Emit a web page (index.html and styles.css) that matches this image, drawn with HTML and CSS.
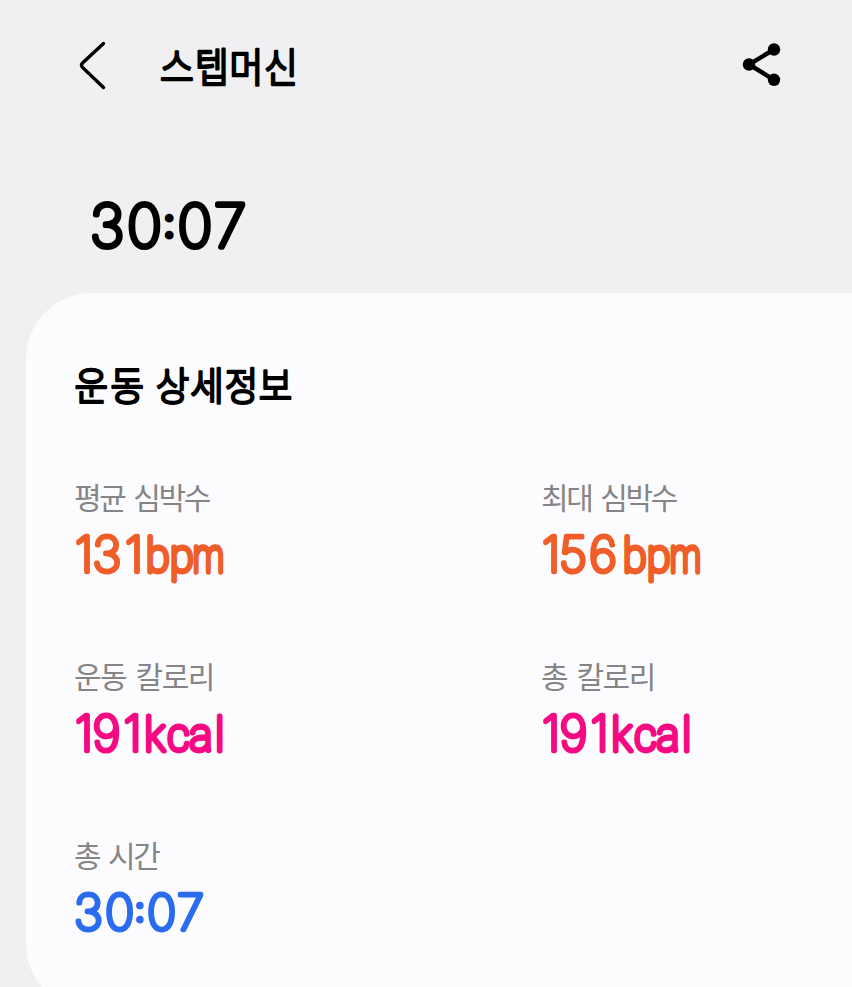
FILE: index.html
```html
<!DOCTYPE html>
<html lang="ko">
<head>
<meta charset="utf-8">
<title>스텝머신</title>
<link rel="stylesheet" href="styles.css">
</head>
<body>
<header class="bar">
  <svg class="back" viewBox="0 0 30 52" aria-hidden="true"><path d="M25.5 3.5 L4.5 23 Q2.5 25.2 4.5 27.4 L25.5 47.5"/></svg>
  <h1 class="title"><svg class="label-art" width="150" height="54"><text transform="translate(0 42) scale(.92 1)" x="0 38 75.5 113">스텝머신</text></svg></h1>
  <svg class="share" viewBox="0 0 40 46" aria-hidden="true"><path d="M32 7.5 L7 22.5 L32 37.8"/><circle cx="32" cy="7.5" r="6.2"/><circle cx="7" cy="22.5" r="6.2"/><circle cx="32" cy="37.8" r="6.2"/></svg>
</header>
<div class="duration"><svg class="value" width="180" height="60"><text class="digits large" x="1 38" y="50">30<tspan class="colon" x="74" y="40.5">:</tspan><tspan x="88.5 125" y="50">07</tspan></text></svg></div>
<main class="card">
  <h2 class="heading"><svg class="label-art small" width="230" height="58"><text transform="translate(0.5 43) scale(.945 1)" x="0 38 75 86 122.5 159 195">운동 상세정보</text></svg></h2>
  <dl class="stats">
    <div class="stat"><dt>평균 심박수</dt><dd><svg class="value orange" width="180" height="60"><text class="digits" x="1 18.5 51" y="49.5">131</text><text class="letters" transform="translate(72 49.5) scale(.92 1)" x="0 26">bp</text><text class="letters m" transform="translate(119 49.5) scale(.73 1)">m</text></svg></dd></div>
    <div class="stat"><dt>최대 심박수</dt><dd><svg class="value orange" width="180" height="60"><text class="digits" x="1 18 48" y="49.5">156</text><text class="letters" transform="translate(82 49.5) scale(.92 1)" x="0 26">bp</text><text class="letters m" transform="translate(129 49.5) scale(.73 1)">m</text></svg></dd></div>
    <div class="stat"><dt class="wide">운동 칼로리</dt><dd><svg class="value pink" width="180" height="60"><text class="digits" x="1 18.5 49.5" y="49.5">191</text><text class="letters" transform="translate(70.5 49.5) scale(.92 1)" x="0 25 49 77">kcal</text></svg></dd></div>
    <div class="stat"><dt class="wide">총 칼로리</dt><dd><svg class="value pink" width="180" height="60"><text class="digits" x="1 18.5 49.5" y="49.5">191</text><text class="letters" transform="translate(70.5 49.5) scale(.92 1)" x="0 25 49 77">kcal</text></svg></dd></div>
    <div class="stat"><dt>총 시간</dt><dd><svg class="value blue" width="180" height="60"><text class="digits" x="0 31" y="49.5">30<tspan class="colon" x="60.5" y="41.5">:</tspan><tspan x="73 103" y="49.5">07</tspan></text></svg></dd></div>
  </dl>
</main>
</body>
</html>
```

FILE: styles.css
```css
* { box-sizing: border-box; margin: 0; padding: 0; }
html { background: #f0f0f2; }
body { height: 987px; overflow: hidden; background: #f0f0f2; color: #000; font-family: Roboto, "Noto Sans CJK KR", sans-serif; white-space: nowrap; }
svg { display: block; overflow: visible; }
.bar { display: flex; align-items: flex-start; height: 197px; padding: 40px 70px 0 78px; }
.back { width: 30px; height: 52px; fill: none; stroke: #000; stroke-width: 3.4; stroke-linecap: round; }
.title { margin-left: 52px; }
.label-art { fill: #000; stroke: #000; stroke-width: 2.6; stroke-linejoin: round; font: 300 40px "Noto Sans CJK KR", sans-serif; }
.label-art.small { font-size: 38.5px; stroke-width: 2.5; }
.share { width: 40px; height: 46px; margin: 2px 0 0 auto; stroke: #000; stroke-width: 4.5; fill: none; }
.share circle { fill: #000; stroke: none; }
.duration { height: 96px; padding-left: 89px; }
.value { fill: currentColor; stroke: currentColor; stroke-linejoin: round; stroke-linecap: round; }
.digits { font: 100 49.5px Inter, sans-serif; stroke-width: 4.7px; }
.digits.large { font-size: 59px; stroke-width: 5.4px; }
.colon { font-size: 36px; font-weight: 400; stroke-width: 2.8px; }
.large .colon { font-size: 43px; stroke-width: 3.2px; }
.letters { font: 100 47px Roboto, sans-serif; stroke-width: 4.9px; }
.letters.m { stroke-width: 5.6px; }
.card { height: 717px; margin-left: 26px; padding: 64px 0 0 48px; border-radius: 66px 0 0 66px; background: #fcfcfe; }
.heading { height: 121px; }
.stats { display: grid; grid-template-columns: 467px 1fr; grid-auto-rows: 179px; }
dt { height: 44px; font-family: "Noto Sans CJK KR", sans-serif; font-size: 30px; line-height: 37px; letter-spacing: -2.3px; word-spacing: 2.5px; color: #858587; }
dt.wide { letter-spacing: -1.5px; }
dd { height: 64px; }
.orange { color: #ef5d28; }
.pink { color: #f50a83; }
.blue { color: #2a6cef; }
```
